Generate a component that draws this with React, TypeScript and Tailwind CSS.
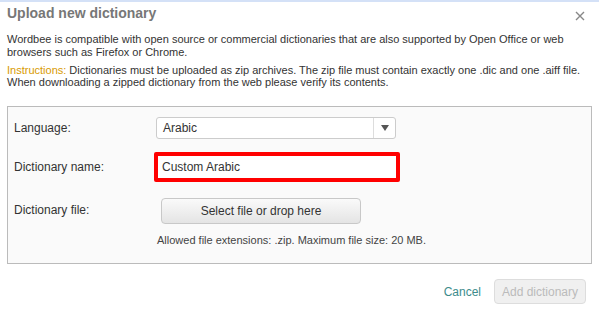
import React from "react";

export default function App() {
  return (
    <div className="relative h-[331px] w-[599px] overflow-hidden bg-white font-['Liberation_Sans',Arial,sans-serif] text-[11px] text-[#333]">
      {/* top accent */}
      <div className="h-[2px] w-full bg-[#d4e1f7]" />

      {/* Header */}
      <div className="flex items-center justify-between pl-[7px] pr-[14px] pt-[2px]">
        <h1 className="text-[14px] font-bold leading-[18px] text-[#777]">Upload new dictionary</h1>
        <button className="mt-[6px] text-[#888]">
          <svg width="10" height="10" viewBox="0 0 10 10">
            <path d="M1 1L9 9M9 1L1 9" stroke="#888" strokeWidth="1.4" />
          </svg>
        </button>
      </div>

      {/* Intro */}
      <div className="pl-[7px] pr-[12px] pt-[11px]">
        <p className="leading-[13px]">
          Wordbee is compatible with open source or commercial dictionaries that are also supported by Open Office or web browsers such as Firefox or Chrome.
        </p>
        <p className="mt-[5px] leading-[12px]">
          <span className="text-[#d89a00]">Instructions:</span> Dictionaries must be uploaded as zip archives. The zip file must contain exactly one .dic and one .aiff file.{" "}
          When downloading a zipped dictionary from the web please verify its contents.
        </p>
      </div>

      {/* Form panel */}
      <div className="mx-[7px] mt-[18px] h-[158px] border border-[#bbb] bg-[#fafafa] pl-[6px] pt-[10px] text-[12px]">
        <div className="flex items-center">
          <label className="w-[142px] shrink-0">Language:</label>
          <div className="flex h-[22px] w-[240px] items-center rounded-[3px] border border-[#ccc] bg-white">
            <span className="flex-1 pl-[6px]">Arabic</span>
            <span className="flex h-full w-[22px] items-center justify-center border-l border-[#ddd]">
              <svg width="8" height="6" viewBox="0 0 8 6">
                <path d="M0 0H8L4 6Z" fill="#555" />
              </svg>
            </span>
          </div>
        </div>

        <div className="mt-[13px] flex items-center">
          <label className="w-[140px] shrink-0">Dictionary name:</label>
          <div className="flex h-[30px] w-[246px] items-center rounded-[2px] border-[4px] border-[#ff0000] bg-white pl-[4px]">
            Custom Arabic
          </div>
        </div>

        <div className="mt-[16px] flex">
          <label className="mt-[3px] w-[147px] shrink-0">Dictionary file:</label>
          <div className="flex flex-col">
            <button className="h-[26px] w-[200px] rounded-[4px] border border-[#c8c8c8] bg-gradient-to-b from-[#fafafa] to-[#e4e4e4] text-[12px] text-[#333]">
              Select file or drop here
            </button>
            <p className="-ml-[4px] mt-[8px] text-[11px] text-[#444]">Allowed file extensions: .zip. Maximum file size: 20 MB.</p>
          </div>
        </div>
      </div>

      {/* Footer */}
      <div className="flex items-center justify-end gap-[13px] pr-[13px] pt-[15px]">
        <button className="text-[12px] text-[#3d8c8c]">Cancel</button>
        <button className="h-[25px] w-[92px] rounded-[4px] border border-[#ddd] bg-[#f0f0f0] text-[12px] text-[#bbb]">
          Add dictionary
        </button>
      </div>
    </div>
  );
}
